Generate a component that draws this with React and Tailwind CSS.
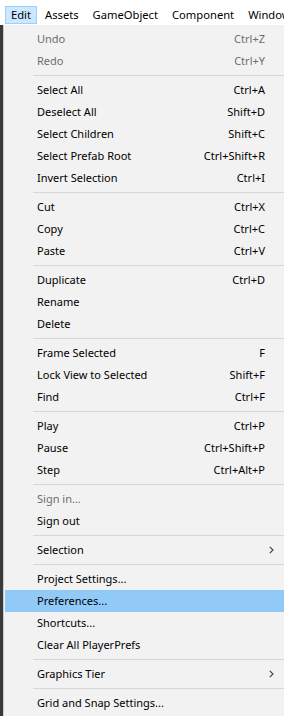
const groups = [
  [
    { label: "Undo", key: "Ctrl+Z", disabled: true },
    { label: "Redo", key: "Ctrl+Y", disabled: true },
  ],
  [
    { label: "Select All", key: "Ctrl+A" },
    { label: "Deselect All", key: "Shift+D" },
    { label: "Select Children", key: "Shift+C" },
    { label: "Select Prefab Root", key: "Ctrl+Shift+R" },
    { label: "Invert Selection", key: "Ctrl+I" },
  ],
  [
    { label: "Cut", key: "Ctrl+X" },
    { label: "Copy", key: "Ctrl+C" },
    { label: "Paste", key: "Ctrl+V" },
  ],
  [
    { label: "Duplicate", key: "Ctrl+D" },
    { label: "Rename" },
    { label: "Delete" },
  ],
  [
    { label: "Frame Selected", key: "F" },
    { label: "Lock View to Selected", key: "Shift+F" },
    { label: "Find", key: "Ctrl+F" },
  ],
  [
    { label: "Play", key: "Ctrl+P" },
    { label: "Pause", key: "Ctrl+Shift+P" },
    { label: "Step", key: "Ctrl+Alt+P" },
  ],
  [
    { label: "Sign in...", disabled: true },
    { label: "Sign out" },
  ],
  [{ label: "Selection", sub: true }],
  [
    { label: "Project Settings..." },
    { label: "Preferences...", active: true },
    { label: "Shortcuts..." },
    { label: "Clear All PlayerPrefs" },
  ],
  [{ label: "Graphics Tier", sub: true }],
  [{ label: "Grid and Snap Settings..." }],
]

const topMenus = ["Edit", "Assets", "GameObject", "Component", "Window"]

// tiny submenu arrow like the win32 one
const SubArrow = () => (
  <svg width="5" height="8" viewBox="0 0 5 8" className="-mr-[9px]">
    <path d="M0.8 0.8 L4 4 L0.8 7.2" fill="none" stroke="#444" strokeWidth="1.2" />
  </svg>
)

const MenuItem = ({ item }) => (
  <div
    className={`flex items-center h-[22px] pl-[32px] pr-[19px] ${
      item.active ? "bg-[#91c9f7]" : ""
    } ${item.disabled ? "text-[#6d6d6d]" : "text-black"}`}
  >
    <span className="flex-1 whitespace-nowrap">{item.label}</span>
    {item.key && <span className="whitespace-nowrap">{item.key}</span>}
    {item.sub && <SubArrow />}
  </div>
)

export default function App() {
  return (
    <div
      className="w-[284px] h-[716px] overflow-hidden bg-[#f2f2f2] text-[11px] flex flex-col"
      style={{ fontFamily: '"Noto Sans", "Segoe UI", sans-serif' }}
    >
      {/* menu bar */}
      <div className="h-[25px] bg-white flex items-end pl-[5px] shrink-0 text-[11.2px]">
        {topMenus.map((m, i) => (
          <div
            key={m}
            className={`h-[18px] mb-[1px] flex items-center px-[5px] mr-[2px] whitespace-nowrap border ${
              i === 0 ? "bg-[#cce8ff] border-[#99d1ff]" : "border-transparent"
            }`}
          >
            {m}
          </div>
        ))}
      </div>

      <div className="flex flex-1">
        <div className="w-[3px] bg-[#3a3a3a] shrink-0" />
        <div className="flex-1 border-l border-[#cccccc] pl-[1px] pt-[3px]">
          {groups.map((g, gi) => (
            <div key={gi}>
              {gi > 0 && (
                <div className="pt-[3px] pb-[3px] pl-[28px]">
                  <div className="h-px bg-[#d7d7d7]" />
                </div>
              )}
              {g.map((item) => (
                <MenuItem key={item.label} item={item} />
              ))}
            </div>
          ))}
        </div>
      </div>
    </div>
  )
}
